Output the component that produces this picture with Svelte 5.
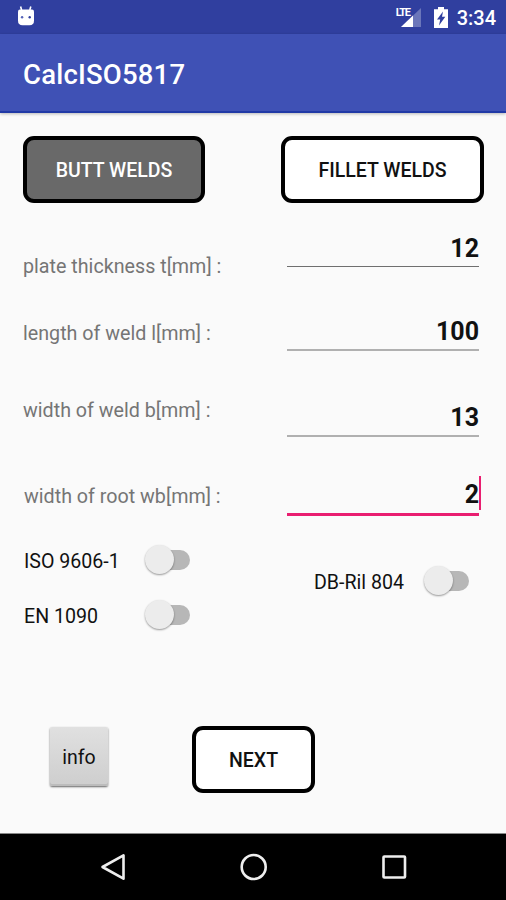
<script>
  let mode = $state('butt');
  let switches = $state({ iso: false, en: false, db: false });
  const fields = [
    { id: 'plate', label: 'plate thickness t[mm] :', value: '12' },
    { id: 'length', label: 'length of weld l[mm] :', value: '100' },
    { id: 'width', label: 'width of weld b[mm] :', value: '13' },
    { id: 'root', label: 'width of root wb[mm] :', value: '2', focused: true }
  ];
</script>

{#snippet toggle(key, text)}
  <div class="option {key}">
    <span class="name">{text}</span>
    <button class="switch" class:on={switches[key]} role="switch" aria-checked={switches[key]} aria-label={text} onclick={() => (switches[key] = !switches[key])}>
      <span class="thumb"></span>
    </button>
  </div>
{/snippet}

<div class="screen">
  <div class="status">
    <svg class="bot" width="18" height="20" viewBox="0 0 18 20">
      <path d="M3.6 0.5L4.6 4M13.8 0.5L12.8 4" stroke="#fff" stroke-width="1.6" />
      <path d="M1 5.5Q1 3.5 3 3.5H15Q17 3.5 17 5.5V14.5Q17 19.3 12.5 19.3H5.5Q1 19.3 1 14.5Z" fill="#fff" />
      <circle cx="5.1" cy="11.2" r="1.2" fill="#5563b8" /><circle cx="12.7" cy="11.2" r="1.2" fill="#303f9f" />
    </svg>
    <div class="tray">
      <div class="network">
        <span class="lte">LTE</span>
        <svg width="22" height="20" viewBox="0 0 22 20">
          <path d="M21 0V19H1Z" fill="#6b76ba" />
          <path d="M13 7.6V19H1Z" fill="#fff" />
        </svg>
      </div>
      <svg class="battery" width="14" height="21" viewBox="0 0 14 21">
        <path d="M4 0H10V2.2H14V21H0V2.2H4Z" fill="#fff" />
        <path d="M9 4.5L3 12.5H6.2L5 18.5L11.3 9.8H8Z" fill="#303f9f" />
      </svg>
      <span class="clock">3:34</span>
    </div>
  </div>

  <header><h1>CalcISO5817</h1></header>

  <main>
    <div class="tabs">
      <button class="box butt" class:selected={mode === 'butt'} onclick={() => (mode = 'butt')}><span>BUTT WELDS</span></button>
      <button class="box fillet" class:selected={mode === 'fillet'} onclick={() => (mode = 'fillet')}><span>FILLET WELDS</span></button>
    </div>

    {#each fields as f (f.id)}
      <div class="field {f.id}" class:focused={f.focused}>
        <span class="label">{f.label}</span>
        <div class="entry"><span class="value">{f.value}{#if f.focused}<i class="caret"></i>{/if}</span></div>
      </div>
    {/each}

    <div class="options">
      <div class="group">
        {@render toggle('iso', 'ISO 9606-1')}
        {@render toggle('en', 'EN 1090')}
      </div>
      {@render toggle('db', 'DB-Ril 804')}
    </div>

    <div class="actions">
      <button class="info"><span>info</span></button>
      <button class="box next"><span>NEXT</span></button>
    </div>
  </main>

  <nav>
    <svg width="28" height="30" viewBox="0 0 28 30"><path d="M3.5 15L24.5 3.3V26.7Z" fill="none" stroke="#eee" stroke-width="2.6" stroke-linejoin="round" /></svg>
    <svg width="28" height="30" viewBox="0 0 28 30"><circle cx="13.7" cy="15" r="12" fill="none" stroke="#eee" stroke-width="2.6" /></svg>
    <svg width="28" height="30" viewBox="0 0 28 30"><rect x="3.5" y="4.5" width="21.5" height="21" rx="0.8" fill="none" stroke="#eee" stroke-width="2.6" /></svg>
  </nav>
</div>

<style>
  :global(body) { margin: 0; }
  .screen { width: 506px; height: 900px; display: flex; flex-direction: column; overflow: hidden; background: #fafafa; font-family: Roboto, sans-serif; color: #111; }
  button { font: inherit; color: inherit; padding: 0; margin: 0; box-sizing: border-box; }
  span { white-space: nowrap; }

  .status { height: 34px; box-sizing: border-box; padding: 0 10px 0 17px; display: flex; justify-content: space-between; background: #303f9f; color: #fff; }
  .bot { margin-top: 6px; }
  .tray { display: flex; align-items: flex-start; }
  .network { position: relative; width: 22px; height: 20px; margin: 8px 12px 0 0; }
  .lte { position: absolute; z-index: 1; left: -4px; top: 0; font: 700 11px/10px Roboto, sans-serif; letter-spacing: -1.2px; }
  .network svg { display: block; }
  .battery { margin: 7px 9px 0 0; }
  .clock { font-size: 20px; line-height: 24px; font-weight: 500; margin-top: 6px; }

  header { position: relative; height: 79px; box-sizing: border-box; padding: 25px 23px 0; background: #3f51b5; border-bottom: 2px solid #2139a6; box-shadow: 0 1px 3px #0004; }
  h1 { margin: 0; color: #fff; font-size: 27.5px; line-height: 32px; font-weight: 500; letter-spacing: 0.2px; }

  main { flex: 1; min-height: 0; padding: 23px 22px 0 23px; display: flex; flex-direction: column; }
  .tabs { display: flex; justify-content: space-between; height: 67px; }
  .box { height: 67px; padding-top: 2px; border: 4px solid #000; border-radius: 11px; background: #fff; color: #111; font-size: 19.5px; line-height: 24px; font-weight: 500; }
  .butt { width: 182px; }
  .fillet { width: 203px; }
  .selected { background: #696969; color: #fff; }

  .field { display: flex; justify-content: space-between; align-items: stretch; padding-right: 5px; }
  .label { font-size: 19.7px; line-height: 24px; color: #757575; }
  .entry { width: 192px; box-sizing: border-box; text-align: right; border-bottom: 2px solid #b0b0b0; }
  .value { display: inline-block; position: relative; font-size: 25px; line-height: 30px; font-weight: 700; }
  .plate { height: 64px; }
  .plate .label { padding-top: 52px; }
  .plate .value { margin-top: 31px; }
  .plate .entry { border-bottom: 1px solid #6f6f6f; }
  .length { height: 84px; }
  .length .label { padding-top: 55px; }
  .length .value { margin-top: 50px; }
  .width { height: 86px; }
  .width .label { padding-top: 48px; }
  .width .value { margin-top: 52px; }
  .root { height: 79px; }
  .root .label { padding-top: 48px; padding-left: 1px; }
  .root .value { margin-top: 43px; }
  .focused .entry { border-bottom: 3px solid #e91e70; }
  .caret { position: absolute; right: -2px; top: -4px; width: 2px; height: 34px; background: #e91e70; }

  .options { display: flex; justify-content: space-between; height: 130px; }
  .group { display: flex; flex-direction: column; gap: 25px; padding-top: 29px; }
  .option { display: flex; align-items: center; justify-content: space-between; height: 30px; font-size: 19.6px; }
  .name { padding: 3px 0 0 1px; }
  .group .option { width: 167px; }
  .option.db { margin-top: 50px; padding-right: 15px; width: 156px; }
  .switch { position: relative; width: 45px; height: 20px; flex: none; border: 0; border-radius: 10px; background: linear-gradient(90deg, transparent 14px, #b7b7b7 14px); }
  .thumb { position: absolute; left: 0; top: -5px; width: 29px; height: 29px; border-radius: 50%; background: #ececec; box-shadow: 0 1px 2px #0006; }
  .on .thumb { left: 17px; background: #e91e70; }

  .actions { display: flex; align-items: flex-start; padding: 80px 0 0 27px; }
  .info { width: 58px; height: 59px; margin-top: 1px; margin-right: 84px; padding-top: 2px; border: 0; border-radius: 2px; background: linear-gradient(#e0e0e0, #cecece); box-shadow: 0 1px 2px #0009, inset 0 -2px #bcbcbc; font-size: 19.5px; }
  .next { width: 123px; }

  nav { height: 67px; box-sizing: border-box; padding: 0 98px 0 99px; display: flex; align-items: center; justify-content: space-between; background: #000; border-top: 1px solid #888; }
</style>
